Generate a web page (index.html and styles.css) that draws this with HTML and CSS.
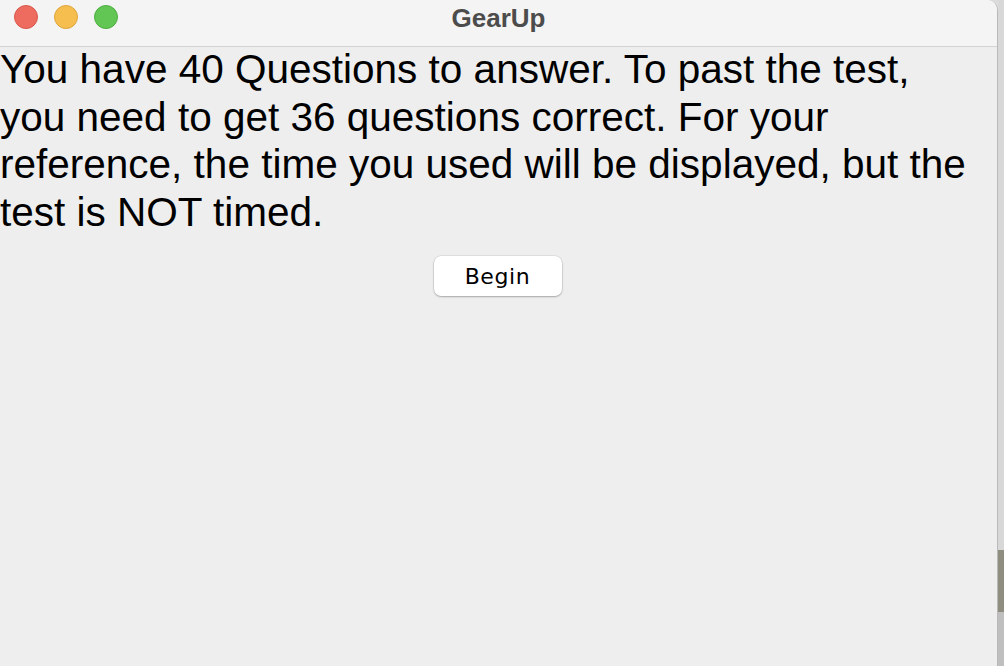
FILE: index.html
```html
<!DOCTYPE html>
<html>
<head>
<meta charset="utf-8">
<title>GearUp</title>
<link rel="stylesheet" href="styles.css">
</head>
<body>
<div class="desktop">
  <div class="window">
    <div class="titlebar">
      <div class="lights">
        <span class="light red"></span>
        <span class="light yellow"></span>
        <span class="light green"></span>
      </div>
      <div class="title">GearUp</div>
    </div>
    <div class="content">
      <p class="intro">You have 40 Questions to answer. To past the test, you need to get 36 questions correct. For your reference, the time you used will be displayed, but the test is NOT timed.</p>
      <div class="actions">
        <button class="begin">Begin</button>
      </div>
    </div>
  </div>
  <div class="side">
    <div class="side-top"></div>
    <div class="side-pic"></div>
    <div class="side-bottom"></div>
  </div>
</div>
</body>
</html>
```

FILE: styles.css
```css
* { box-sizing: border-box; }
html, body {
  margin: 0;
  padding: 0;
  width: 1004px;
  height: 666px;
  overflow: hidden;
}
body {
  background: #dcdcdc;
  font-family: "Liberation Sans", Arial, sans-serif;
}
.desktop {
  display: flex;
  width: 1004px;
  height: 666px;
}
.window {
  width: 998px;
  height: 666px;
  flex: none;
  display: flex;
  flex-direction: column;
  background: #eeeeee;
  border-right: 1px solid #b9b9b9;
  border-top-right-radius: 10px;
  overflow: hidden;
}
.titlebar {
  height: 47px;
  flex: none;
  background: #f4f4f4;
  border-bottom: 1px solid #d3d3d3;
  display: flex;
  align-items: center;
  position: relative;
}
.lights {
  display: flex;
  gap: 16px;
  padding-left: 14px;
  margin-top: -12px;
}
.light {
  width: 24px;
  height: 24px;
  border-radius: 50%;
  display: block;
}
.red { background: #ee6b5f; border: 1px solid #d9574c; }
.yellow { background: #f5be4f; border: 1px solid #dea63b; }
.green { background: #62c655; border: 1px solid #4dae41; }
.title {
  position: absolute;
  left: 0;
  right: 0;
  top: 3px;
  text-align: center;
  font-family: "Liberation Sans", Arial, sans-serif;
  font-weight: bold;
  font-size: 26px;
  color: #4c4c4c;
}
.content {
  flex: 1;
  display: flex;
  flex-direction: column;
}
.intro {
  margin: -1px 0 0 0;
  width: 975px;
  font-size: 40.5px;
  line-height: 47.5px;
  color: #000;
}
.actions {
  display: flex;
  justify-content: center;
  padding-top: 20px;
}
.begin {
  width: 128px;
  height: 40px;
  background: #ffffff;
  border: none;
  border-radius: 7px;
  box-shadow: 0 0 0 0.5px rgba(0,0,0,0.12), 0 1px 2px rgba(0,0,0,0.25);
  font-family: "DejaVu Sans", sans-serif;
  font-size: 22px;
  letter-spacing: 0.6px;
  color: #000;
  padding: 0;
  margin-left: -2px;
}
.side {
  flex: 1;
  display: flex;
  flex-direction: column;
  background: #d6d6d6;
}
.side-top { height: 550px; background: #d8d8d8; }
.side-pic { height: 62px; background: #8f8d7f; }
.side-bottom { flex: 1; background: #bfbfbf; }
```
